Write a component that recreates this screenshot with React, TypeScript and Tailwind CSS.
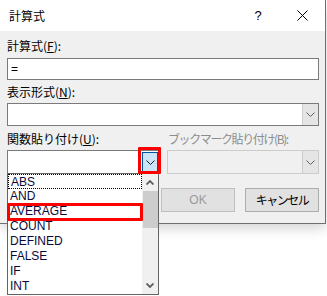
import React from "react";

const jp = { fontFamily: '"Noto Sans CJK JP", "Noto Sans", sans-serif' };
const lat = { fontFamily: '"Liberation Sans", Arial, sans-serif' };

function Chevron({ color = "#606060" }: { color?: string }) {
  return (
    <svg width="9" height="5" viewBox="0 0 9 5">
      <path d="M0.5 0.5 L4.5 4.5 L8.5 0.5" fill="none" stroke={color} strokeWidth="1" />
    </svg>
  );
}

function BoldChevron({ up }: { up?: boolean }) {
  return (
    <svg width="8" height="5" viewBox="0 0 8 5">
      <path
        d={up ? "M0.5 4.5 L4 1 L7.5 4.5" : "M0.5 0.5 L4 4 L7.5 0.5"}
        fill="none"
        stroke="#606060"
        strokeWidth="1.8"
      />
    </svg>
  );
}

const items = ["ABS", "AND", "AVERAGE", "COUNT", "DEFINED", "FALSE", "IF", "INT"];

export default function App() {
  return (
    <div className="relative w-[327px] h-[296px] bg-white overflow-hidden text-black">
      {/* Window */}
      <div className="w-[326px] h-[224px] border-r border-b border-[#6f6f6f] bg-[#f0f0f0] shadow-[0_4px_12px_rgba(0,0,0,0.18)] flex flex-col">
        {/* Title bar */}
        <div className="h-[31px] bg-white flex items-center text-[12px]" style={jp}>
          <span className="pl-[9px]">計算式</span>
          <span className="ml-auto w-[28px] text-center text-[13px]" style={lat}>?</span>
          <div className="w-[46px] ml-[7px] flex justify-center">
            <svg width="11" height="11" viewBox="0 0 11 11">
              <path d="M0.5 0.5 L10.5 10.5 M10.5 0.5 L0.5 10.5" stroke="#000" strokeWidth="1" />
            </svg>
          </div>
        </div>
        {/* Body */}
        <div className="flex-1 pl-[7px] pr-[6px] pt-[7px] text-[12px]" style={jp}>
          <div className="h-[16px] leading-[16px]">
            計算式(<span className="underline">F</span>):
          </div>
          <div className="mt-[4px] h-[22px] border border-[#7a7a7a] bg-white flex items-center pl-[3px] text-[12px]" style={lat}>
            =
          </div>
          <div className="mt-[4px] h-[16px] leading-[16px]">
            表示形式(<span className="underline">N</span>):
          </div>
          <div className="mt-[3px] h-[23px] border border-[#7a7a7a] bg-white flex justify-end">
            <div className="w-[16px] bg-[#e5e5e5] border-l border-[#cfcfcf] flex items-center justify-center">
              <Chevron />
            </div>
          </div>
          <div className="grid grid-cols-2 gap-x-[8px] mt-[5px]">
            <div className="h-[16px] leading-[16px]">
              関数貼り付け(<span className="underline">U</span>):
            </div>
            <div className="h-[16px] leading-[16px] text-[#8d8d8d] pl-[1px] tracking-[-1.4px] whitespace-nowrap">ブックマーク貼り付け(B):</div>
            <div className="mt-[3px] h-[24px] border border-[#7a7a7a] bg-white flex justify-end">
              <div className="w-[16px] my-[1px] bg-[#cce4f7] border border-[#005499] flex items-center justify-center">
                <Chevron color="#202020" />
              </div>
            </div>
            <div className="mt-[3px] h-[24px] border border-[#cccccc] bg-[#f0f0f0] flex justify-end">
              <div className="w-[16px] bg-[#e5e5e5] border-l border-[#cccccc] flex items-center justify-center">
                <Chevron />
              </div>
            </div>
          </div>
          <div className="mt-[14px] flex justify-end gap-[10px]">
            <div className="w-[74px] h-[24px] border border-[#bfbfbf] bg-[#e1e1e1] flex items-center justify-center text-[#9a9a9a]" style={lat}>
              OK
            </div>
            <div className="w-[74px] h-[24px] border border-[#adadad] bg-[#e1e1e1] flex items-center justify-center tracking-[-1.5px]">
              キャンセル
            </div>
          </div>
        </div>
      </div>

      {/* Dropdown list */}
      <div className="absolute left-[7px] top-[173px] w-[152px] h-[122px] border border-[#646464] bg-white flex" style={lat}>
        <div className="flex-1 flex flex-col text-[12px] text-[#0a0a3a]">
          {items.map((it, i) => (
            <div
              key={it}
              className={
                "h-[15px] leading-[15px] pl-[2px] " +
                (i === 0 ? "border border-dotted border-black leading-[13px] pl-[1px]" : "")
              }
            >
              {it}
            </div>
          ))}
        </div>
        <div className="w-[16px] bg-[#f0f0f0] flex flex-col items-center">
          <div className="h-[17px] flex items-center justify-center">
            <BoldChevron up />
          </div>
          <div className="w-[15px] h-[37px] bg-[#cdcdcd]" />
          <div className="flex-1" />
          <div className="h-[17px] flex items-center justify-center">
            <BoldChevron />
          </div>
        </div>
      </div>

      {/* Red highlight boxes */}
      <div className="absolute left-[7px] top-[203px] w-[136px] h-[18px] border-[3px] border-[#ff0000] rounded-[1px]" />
      <div className="absolute left-[138px] top-[147px] w-[23px] h-[27px] border-[3px] border-[#ff0000] rounded-[1px]" />
    </div>
  );
}
